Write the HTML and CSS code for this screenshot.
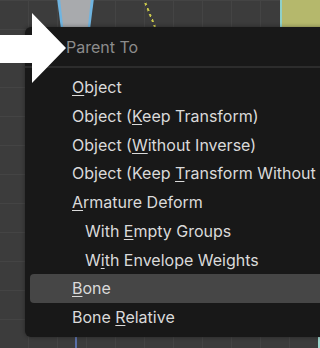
FILE: index.html
```html
<!DOCTYPE html>
<html lang="en">
<head>
    <meta charset="UTF-8">
    <meta name="viewport" content="width=device-width, initial-scale=1.0">
    <title>Parent To</title>
    <link rel="stylesheet" href="styles.css">
</head>
<body>
    <div class="viewport">
        <div class="bone-edge"></div>
        <div class="bone-shape"></div>
        <div class="dash-line"></div>
        <div class="mesh-shape"></div>
        <div class="bottom-line blue"></div>
        <div class="bottom-line yellow"></div>

        <div class="menu">
            <div class="menu-title">Parent To</div>
            <div class="menu-sep"></div>
            <div class="menu-item"><u>O</u>bject</div>
            <div class="menu-item">Object (<u>K</u>eep Transform)</div>
            <div class="menu-item">Object (<u>W</u>ithout Inverse)</div>
            <div class="menu-item">Object (Keep <u>T</u>ransform Without Inverse)</div>
            <div class="menu-item"><u>A</u>rmature Deform</div>
            <div class="menu-item sub">With <u>E</u>mpty Groups</div>
            <div class="menu-item sub">W<u>i</u>th Envelope Weights</div>
            <div class="menu-item active"><u>B</u>one</div>
            <div class="menu-item">Bone <u>R</u>elative</div>
        </div>

        <svg class="arrow" width="70" height="90" viewBox="0 0 70 90">
            <polygon points="0,35 32,35 32,13 66,48 32,83 32,63 0,63" fill="#ffffff"/>
        </svg>
    </div>
</body>
</html>
```

FILE: styles.css
```css
body {
    margin: 0;
    background: #3b3b3b;
    font-family: Inter, "Noto Sans", sans-serif;
}
.viewport {
    position: relative;
    width: 320px;
    height: 348px;
    overflow: hidden;
    background-color: #3c3c3c;
    background-image:
        repeating-linear-gradient(90deg, transparent 0, transparent 28px, #444444 28px, #444444 29px),
        repeating-linear-gradient(0deg, transparent 0, transparent 28px, #444444 28px, #444444 29px);
}
.bone-edge {
    position: absolute;
    left: 57px;
    top: -2px;
    width: 37px;
    height: 29px;
    background: #6fb4e0;
    clip-path: polygon(0 0, 100% 0, 90% 100%, 10% 100%);
}
.bone-shape {
    position: absolute;
    left: 60px;
    top: -2px;
    width: 31px;
    height: 29px;
    background: #a8aaad;
    clip-path: polygon(0 0, 100% 0, 90% 100%, 10% 100%);
}
.dash-line {
    position: absolute;
    left: 148px;
    top: -4px;
    width: 2px;
    height: 32px;
    background: repeating-linear-gradient(180deg, #c9c84a 0, #c9c84a 3px, transparent 3px, transparent 6px);
    transform: rotate(-22deg);
}
.mesh-shape {
    position: absolute;
    left: 280px;
    top: 0;
    width: 40px;
    height: 27px;
    background: #b5b86c;
    border-left: 2px solid #8fd0c8;
}
.bottom-line {
    position: absolute;
    top: 337px;
    height: 11px;
    width: 2px;
}
.bottom-line.blue {
    left: 75px;
    background: #5a6fa8;
}
.bottom-line.yellow {
    left: 318px;
    background: #9fd8d0;
}
.menu {
    position: absolute;
    left: 25px;
    top: 27px;
    width: 320px;
    height: 310px;
    background: #181818;
    border-radius: 6px 0 0 6px;
    padding-top: 7px;
    box-sizing: border-box;
    box-shadow: 0 0 4px rgba(0, 0, 0, 0.4);
}
.menu-title {
    height: 27px;
    line-height: 27px;
    padding-left: 41px;
    color: #8c8c8c;
    font-size: 16px;
}
.menu-sep {
    height: 2px;
    margin: 5px 0 5px 0;
    background: #2c2c2c;
}
.menu-item {
    height: 28.75px;
    line-height: 28.75px;
    padding-left: 42px;
    margin-left: 5px;
    color: #dadada;
    font-size: 16px;
    white-space: nowrap;
    border-radius: 4px 0 0 4px;
}
.menu-item u {
    text-decoration-thickness: 1px;
    text-underline-offset: 2px;
}
.menu-item.sub {
    padding-left: 55px;
}
.menu-item.active {
    background: #464646;
}
.arrow {
    position: absolute;
    left: 0;
    top: 0;
}
```
